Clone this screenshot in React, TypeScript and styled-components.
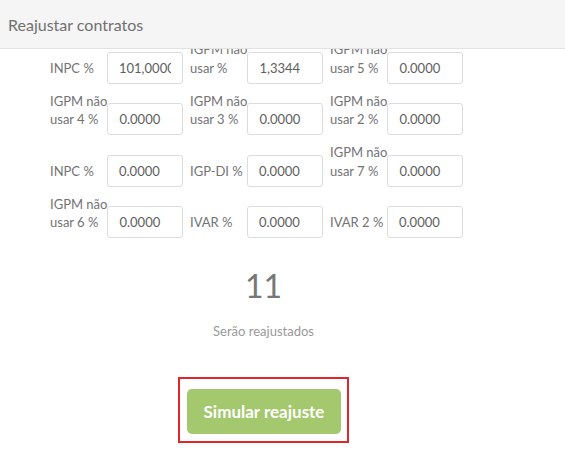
import React from 'react'
import styled, { createGlobalStyle } from 'styled-components'

const GlobalStyle = createGlobalStyle`
  html, body {
    margin: 0;
    padding: 0;
    background: #fff;
    font-family: Lato, "Open Sans", Arial, sans-serif;
  }
`;

const Panel = styled.div`
  width: 565px;
  height: 450px;
  display: flex;
  flex-direction: column;
  overflow: hidden;
`;

const Header = styled.header`
  flex: 0 0 48px;
  display: flex;
  align-items: center;
  padding: 0 8px;
  background: #f5f5f5;
  border-bottom: 1px solid #e2e2e2;
  color: #707070;
  font-size: 16px;
  position: relative;
  z-index: 1;
`;

const Body = styled.div`
  flex: 1;
  overflow: hidden;
`;

const Form = styled.div`
  margin-top: -9px;
  padding-left: 50px;
  display: grid;
  grid-template-columns: repeat(3, 132px);
  column-gap: 8px;
  row-gap: 8px;
`;

const Field = styled.div`
  display: flex;
  align-items: last baseline;
`;

const Label = styled.label`
  flex: 0 0 57px;
  font-size: 13px;
  line-height: 18.6px;
  color: #737373;
  span {
    display: block;
    white-space: nowrap;
  }
`;

const Input = styled.input`
  width: 76px;
  height: 32px;
  box-sizing: border-box;
  padding: 0 11px;
  border: 1px solid #dcdcdc;
  border-radius: 3px;
  font-family: inherit;
  font-size: 13px;
  color: #5e5e5e;
  background: #fff;
  outline: none;
`;

const Summary = styled.div`
  width: 527px;
  display: flex;
  flex-direction: column;
  align-items: center;
  padding-top: 30px;
`;

const Count = styled.div`
  font-size: 32px;
  line-height: 36px;
  color: #777;
`;

const Caption = styled.div`
  margin-top: 18px;
  font-size: 13px;
  line-height: 18px;
  color: #999;
`;

const Highlight = styled.div`
  margin-top: 37px;
  border: 2px solid #e2252b;
  padding: 10px 6px 7px 7px;
`;

const Button = styled.button`
  width: 154px;
  height: 45px;
  border: none;
  border-radius: 5px;
  background: #a3c86d;
  color: #fff;
  font-family: inherit;
  font-size: 17px;
  font-weight: 700;
  cursor: pointer;
`;

const fields = [
  { label: ['INPC %'], value: '101,0000' },
  { label: ['IGPM não', 'usar %'], value: '1,3344' },
  { label: ['IGPM não', 'usar 5 %'], value: '0.0000' },
  { label: ['IGPM não', 'usar 4 %'], value: '0.0000' },
  { label: ['IGPM não', 'usar 3 %'], value: '0.0000' },
  { label: ['IGPM não', 'usar 2 %'], value: '0.0000' },
  { label: ['INPC %'], value: '0.0000' },
  { label: ['IGP-DI %'], value: '0.0000' },
  { label: ['IGPM não', 'usar 7 %'], value: '0.0000' },
  { label: ['IGPM não', 'usar 6 %'], value: '0.0000' },
  { label: ['IVAR %'], value: '0.0000' },
  { label: ['IVAR 2 %'], value: '0.0000' },
];

const App = () => {
  return (
    <React.Fragment>
      <GlobalStyle />
      <Panel>
        <Header>Reajustar contratos</Header>
        <Body>
          <Form>
            {fields.map((f, i) => (
              <Field key={i}>
                <Label>
                  {f.label.map((line) => <span key={line}>{line}</span>)}
                </Label>
                <Input defaultValue={f.value} />
              </Field>
            ))}
          </Form>
          <Summary>
            <Count>11</Count>
            <Caption>Serão reajustados</Caption>
            <Highlight>
              <Button>Simular reajuste</Button>
            </Highlight>
          </Summary>
        </Body>
      </Panel>
    </React.Fragment>
  )
}

export default App
